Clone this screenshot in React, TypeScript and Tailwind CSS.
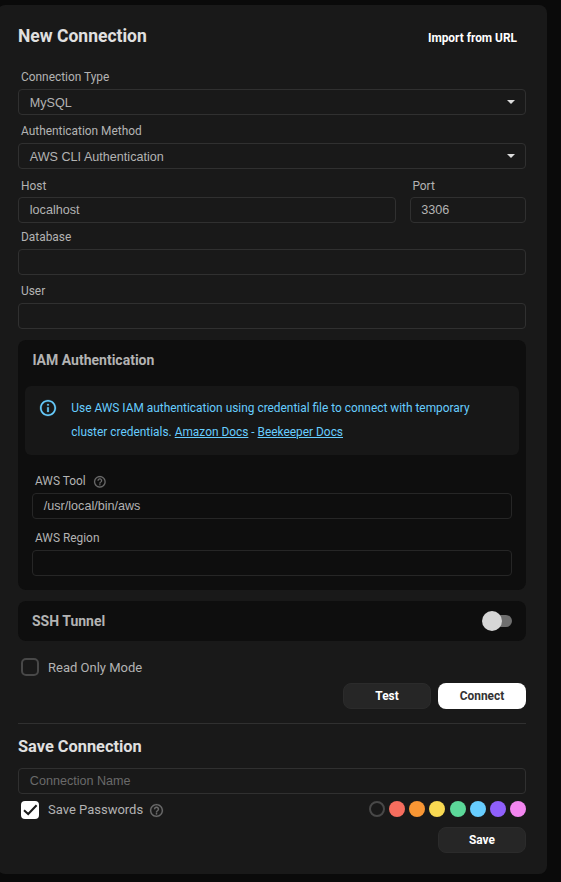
import type { ReactNode } from "react";

function Label({ children, className = "mb-[3px]" }: { children: ReactNode; className?: string }) {
  return (
    <label className={`flex h-[19px] items-end pl-[3px] text-[11.9px] leading-[18px] text-[#b3b3b3] ${className}`}>
      {children}
    </label>
  );
}

function Box({ children, className = "border-[#303030]" }: { children?: ReactNode; className?: string }) {
  return (
    <div
      className={`flex h-[26px] w-full items-center justify-between rounded-[4px] border pr-2.5 pl-[10.8px] font-['Liberation_Sans',Arial,sans-serif] text-[12.6px] leading-6 text-[#b3b3b3] ${className}`}
    >
      {children}
    </div>
  );
}

function Caret() {
  return (
    <svg width="8" height="4" viewBox="0 0 8 4" className="mb-px">
      <path d="M0 0h8L4 4z" fill="#dcdcdc" />
    </svg>
  );
}

function Help({ size, className = "" }: { size: number; className?: string }) {
  return (
    <svg width={size} height={size} viewBox="2 2 20 20" fill="#6b6b6b" stroke="#6b6b6b" strokeWidth="0.3" className={`overflow-visible ${className}`}>
      <path d="M11 18h2v-2h-2v2zm1-16C6.48 2 2 6.48 2 12s4.48 10 10 10 10-4.48 10-10S17.52 2 12 2zm0 18c-4.41 0-8-3.59-8-8s3.59-8 8-8 8 3.59 8 8-3.59 8-8 8zm0-14c-2.21 0-4 1.79-4 4h2c0-1.1.9-2 2-2s2 .9 2 2c0 2-3 1.75-3 5h2c0-2.25 3-2.5 3-5 0-2.21-1.79-4-4-4z" />
    </svg>
  );
}

const swatches = ["#f66d5e", "#f89634", "#f8d952", "#5cd899", "#67cdfe", "#8f60fb", "#f386ef"];

const button =
  "flex h-[26px] w-[88px] items-center justify-center rounded-[8px] text-[11.9px] leading-[18px] font-bold";

export default function App() {
  return (
    <div className="h-[882px] w-[561px] overflow-hidden bg-[#0a0a0a] pt-[5px] font-[Roboto,sans-serif]">
      <main className="-ml-[3px] h-[869px] w-[550px] rounded-[8px] bg-[#191919] px-[21px]">
        <header className="flex h-[62px] items-center justify-between">
          <h1 className="text-[17.5px] leading-6 font-bold text-[#e0e0e0]">New Connection</h1>
          <button className="pt-1 pr-[9px] text-[11.9px] leading-[18px] font-bold text-white">Import from URL</button>
        </header>

        <Label>Connection Type</Label>
        <Box>
          <span className="pt-px">MySQL</span>
          <Caret />
        </Box>
        <Label className="mt-1.5 mb-[3px]">Authentication Method</Label>
        <Box>
          <span className="pt-px">AWS CLI Authentication</span>
          <Caret />
        </Box>
        <div className="flex gap-[14px] pt-[7px]">
          <div className="w-[378px]">
            <Label className="mb-[2px]">Host</Label>
            <Box>localhost</Box>
          </div>
          <div className="flex-1">
            <Label className="-ml-[0.6px] mb-[2px]">Port</Label>
            <Box>
              <span className="-ml-[0.6px]">3306</span>
            </Box>
          </div>
        </div>
        <Label className="mt-1 mb-[3px]">Database</Label>
        <Box />
        <Label className="mt-1.5 mb-[3px]">User</Label>
        <Box />

        <section className="mt-[11px] h-[250px] rounded-[8px] bg-[#0e0e0e] px-[7px]">
          <h2 className="h-[46px] pt-2 pl-[7.4px] text-[14px] leading-6 font-bold text-[#b3b3b3]">IAM Authentication</h2>
          <div className="flex h-[69px] rounded-[6px] bg-[#171717] pt-[10px] pl-[15.3px] text-[11.9px] leading-6 text-[#67cdfe]">
            <svg width="16" height="16" viewBox="2 2 20 20" fill="currentColor" stroke="currentColor" strokeWidth="0.3" className="mt-1 mr-[15px] shrink-0 overflow-visible">
              <path d="M11 7h2v2h-2zm0 4h2v6h-2zm1-9C6.48 2 2 6.48 2 12s4.48 10 10 10 10-4.48 10-10S17.52 2 12 2zm0 18c-4.41 0-8-3.59-8-8s3.59-8 8-8 8 3.59 8 8-3.59 8-8 8z" />
            </svg>
            <p className="whitespace-nowrap">
              Use AWS IAM authentication using credential file to connect with temporary
              <br />
              cluster credentials. <a className="underline">Amazon Docs</a> - <a className="underline">Beekeeper Docs</a>
            </p>
          </div>
          <div className="px-[7px] pt-4">
            <Label>
              <span className="mr-[8.7px]">AWS Tool</span>
              <Help size={11.7} className="mb-[2.5px]" />
            </Label>
            <Box className="border-[#262626]">/usr/local/bin/aws</Box>
            <Label className="mt-[9px] mb-[3px]">AWS Region</Label>
            <Box className="border-[#262626]" />
          </div>
        </section>

        <section className="mt-[11px] flex h-10 items-center justify-between rounded-[8px] bg-[#0e0e0e] px-[14px]">
          <h2 className="text-[14px] leading-6 font-bold text-[#b3b3b3]">SSH Tunnel</h2>
          <div className="flex h-3 w-[28px] items-center rounded-full bg-[#6e6e6e]">
            <span className="-ml-0.5 size-5 shrink-0 rounded-full bg-[#d6d6d6]" />
          </div>
        </section>

        <div className="mt-[17px] flex h-[18px] items-center pl-[3px] text-[13px] text-[#b3b3b3]">
          <span className="mr-[9px] size-[18px] rounded-[5px] border-2 border-[#484848]" />
          <span className="pt-[2px]">Read Only Mode</span>
        </div>
        <div className="mt-[7px] flex justify-end gap-[7px]">
          <button className={`${button} border border-[#2b2b2b] bg-[#262626] text-white`}>Test</button>
          <button className={`${button} bg-white text-[#333333]`}>Connect</button>
        </div>

        <hr className="mt-[14px] border-[#303030]" />
        <h2 className="mt-[11px] mb-[9px] text-[16.38px] leading-6 font-bold text-[#e0e0e0]">Save Connection</h2>
        <Box>
          <span className="text-[#6a6a6a]">Connection Name</span>
        </Box>
        <div className="mt-[7px] flex justify-between pl-[3px]">
          <div className="flex h-[18px] items-center text-[13px] text-[#b3b3b3]">
            <span className="mr-[9px] flex size-[18px] items-center justify-center rounded-[4px] bg-white">
              <svg width="18" height="18" viewBox="0 0 18 18" fill="none" stroke="#191919" strokeWidth="2">
                <path d="M3 9.2L7.2 13L15.6 4.3" />
              </svg>
            </span>
            <span className="mr-[7px]">Save Passwords</span>
            <Help size={13} className="mt-px" />
          </div>
          <div className="flex w-[157px] justify-between">
            <span className="size-4 rounded-full border-2 border-[#484848]" />
            {swatches.map((color) => (
              <span key={color} className="size-4 rounded-full" style={{ background: color }} />
            ))}
          </div>
        </div>
        <div className="mt-2 flex justify-end">
          <button className={`${button} border border-[#2b2b2b] bg-[#262626] text-white`}>Save</button>
        </div>
      </main>
    </div>
  );
}
